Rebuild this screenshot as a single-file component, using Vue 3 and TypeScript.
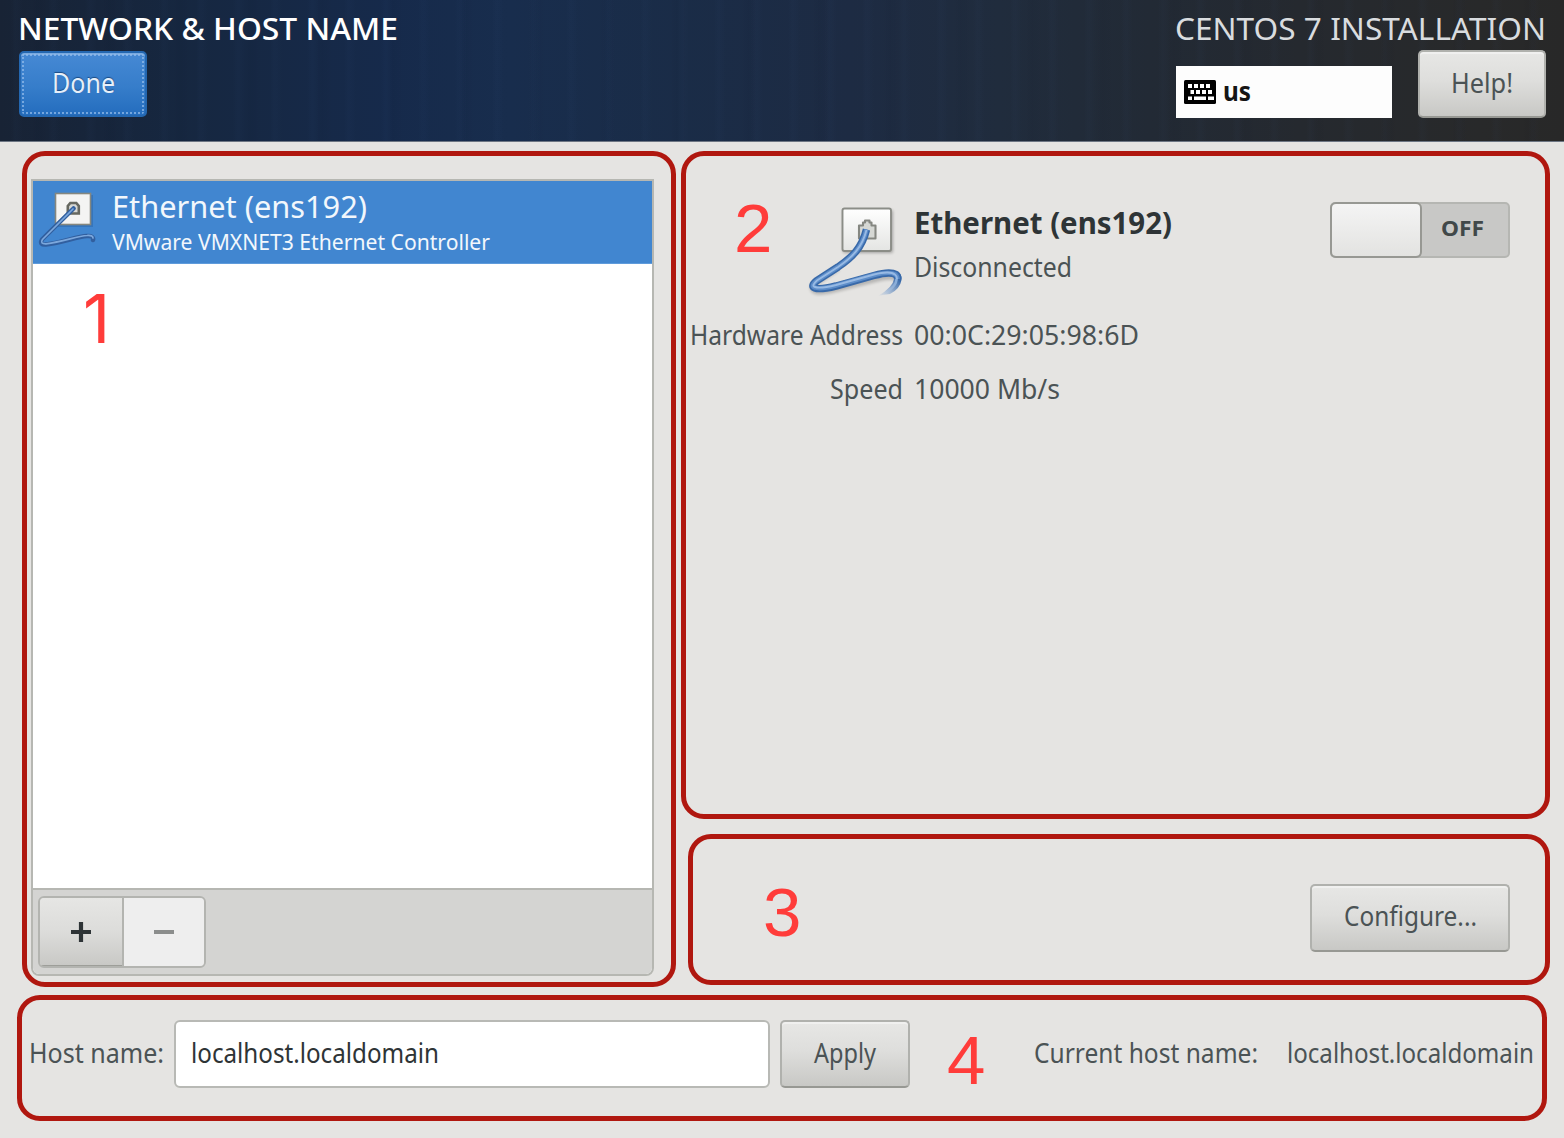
<script setup lang="ts">
import { h, ref, type FunctionalComponent } from 'vue'

interface LabelProps {
  text: string
  w: number
}

/* A single line of text fitted to a given width; the baseline sits 24px below the top. */
const FitLabel: FunctionalComponent<LabelProps> = (props) =>
  h('svg', { width: props.w, height: 30, style: 'display:block;overflow:visible;flex:none' }, [
    h(
      'text',
      { x: 0, y: 24, fill: 'currentColor', textLength: props.w, lengthAdjust: 'spacingAndGlyphs' },
      props.text,
    ),
  ])
FitLabel.props = ['text', 'w']

const device = ref('Ethernet (ens192)')
const hostName = ref('localhost.localdomain')
</script>

<template>
  <div class="screen">
    <header class="header">
      <div class="header-left">
        <FitLabel class="title strong" text="NETWORK &amp; HOST NAME" :w="380" />
        <button class="btn done"><FitLabel text="Done" :w="63" /></button>
      </div>
      <div class="header-right">
        <FitLabel class="title" text="CENTOS 7 INSTALLATION" :w="371" />
        <div class="header-tools">
          <div class="layout">
            <svg width="32" height="24" viewBox="0 0 32 24">
              <rect width="32" height="24" rx="1.5" fill="#000" />
              <g fill="#fff">
                <path d="M4 4h4v4H4zM10 4h4v4h-4zM16 4h4v4h-4zM22 4h4v4h-4z" />
                <path d="M6.500 10h3.500v4H6.500zM12 10h4v4h-4zM18 10h4v4h-4zM24 10h4v4h-4z" />
                <path d="M4 16.500h4v3.500H4zM10 16.500h12v3.500H10zM24 16.500h6v3.500h-6z" />
              </g>
            </svg>
            <FitLabel class="layout-name" text="us" :w="28" />
          </div>
          <button class="btn help"><FitLabel text="Help!" :w="62" /></button>
        </div>
      </div>
    </header>

    <main class="body">
      <div class="upper">
        <section class="frame devices">
          <span class="mark m1">1</span>
          <div class="list">
            <div class="row">
              <svg class="row-icon" width="60" height="62" viewBox="0 0 60 62">
                <rect x="19" y="4" width="36" height="32" fill="#1d4f8a" opacity=".3" />
                <rect x="17.500" y="2.500" width="35" height="31" fill="#f4f4f3" stroke="#85877f" stroke-width="1.600" />
                <path d="M29.800 22.500v-7.500l2.500-3h6l2.500 3v7.500z" fill="#d6d7d3" stroke="#666860" stroke-width="2.600" />
                <path d="M35.500 17.500L4 48.500Q1 54 8 53.500C26 51 39 45.500 49 45Q56 44.500 55 49" fill="none" stroke="#315f9f" stroke-width="4.500" stroke-linecap="round" />
                <path d="M35 18L4.500 48.500Q1.500 53 8 52.800C26 50.500 39 45 49 44.500Q55 44 55 47" fill="none" stroke="#7ba7dc" stroke-width="1.700" stroke-linecap="round" />
              </svg>
              <div class="row-text">
                <FitLabel class="row-title" :text="device" :w="255" />
                <FitLabel class="row-sub" text="VMware VMXNET3 Ethernet Controller" :w="378" />
              </div>
            </div>
            <div class="toolbar">
              <div class="pair">
                <button class="add">
                  <svg width="20" height="20"><path d="M0 10h20M10 0v20" stroke="#2e3436" stroke-width="4.200" /></svg>
                </button>
                <button class="remove">
                  <svg width="20" height="20"><path d="M0 10h20" stroke="#8b8d8c" stroke-width="4.200" /></svg>
                </button>
              </div>
            </div>
          </div>
        </section>

        <div class="right">
          <section class="frame details">
            <span class="mark m2">2</span>
            <div class="summary">
              <svg class="big-icon" width="96" height="92" viewBox="0 0 96 92">
                <defs>
                  <linearGradient id="plate" x1="0" y1="0" x2="0" y2="1">
                    <stop offset="0" stop-color="#fff" />
                    <stop offset="1" stop-color="#e4e5e3" />
                  </linearGradient>
                  <linearGradient id="tail" gradientUnits="userSpaceOnUse" x1="90" y1="73" x2="70" y2="91">
                    <stop offset="0" stop-color="#3869a9" />
                    <stop offset="1" stop-color="#5b8bc9" stop-opacity="0" />
                  </linearGradient>
                  <linearGradient id="tailShine" gradientUnits="userSpaceOnUse" x1="90" y1="73" x2="74" y2="90">
                    <stop offset="0" stop-color="#8eb4e1" />
                    <stop offset="1" stop-color="#b9cfea" stop-opacity="0" />
                  </linearGradient>
                  <filter id="soft" x="-20%" y="-20%" width="140%" height="140%"><feGaussianBlur stdDeviation="1.500" /></filter>
                </defs>
                <rect x="35" y="5" width="50" height="43" rx="2" fill="#000" opacity=".28" filter="url(#soft)" />
                <rect x="34.500" y="3.500" width="48.500" height="42.500" rx="2" fill="url(#plate)" stroke="#8b8d87" stroke-width="1.900" />
                <path d="M51 33.500v-13h4v-3h2v-2h4.500v2h2v3h4v13z" fill="#d6d8d4" stroke="#858781" stroke-width="2.100" stroke-linejoin="round" />
                <path d="M30 63L9 77Q2 83 7 86Q12 88 28 84L68 74Q84 70 89 73.500" fill="none" stroke="#000" opacity=".2" stroke-width="6" filter="url(#soft)" />
                <path d="M83 65Q95 67 93.500 75Q92 84 82 89Q76 89.500 70 91Q85 82 86 74Z" fill="url(#tail)" />
                <path d="M88 71Q91 80 76 89" fill="none" stroke="url(#tailShine)" stroke-width="2.600" />
                <path d="M58.500 24.500C54 43 44 52.500 30 62L9 75.500Q2 81 7 83Q12 85 28 81L66 70.500Q82 66 88 69.500Q90 71 89.500 74" fill="none" stroke="#3869a9" stroke-width="7.500" />
                <path d="M58.500 24.500C54 43 44 52.500 30 62L9 75.500Q2 81 7 82.500Q12 84.500 28 80.500L66 70Q82 66 87.500 69.500Q89.500 71 89.500 74" fill="none" stroke="#5d8dc9" stroke-width="4.500" />
                <path d="M58.500 25C54 43 44 52.500 30 62L9 75.500Q3 81 7 82Q12 84 28 80L66 69.500Q82 65.500 87 69.500Q89 71 89 74" fill="none" stroke="#98bae4" stroke-width="1.900" />
              </svg>
              <div class="summary-text">
                <FitLabel class="device-name" :text="device" :w="258" />
                <FitLabel class="status" text="Disconnected" :w="158" />
              </div>
              <div class="switch">
                <div class="knob"></div>
                <FitLabel class="off" text="OFF" :w="43" />
              </div>
            </div>
            <div class="facts">
              <FitLabel text="Hardware Address" :w="213" />
              <FitLabel text="00:0C:29:05:98:6D" :w="225" />
              <FitLabel text="Speed" :w="73" />
              <FitLabel text="10000 Mb/s" :w="146" />
            </div>
          </section>

          <section class="frame configure">
            <span class="mark m3">3</span>
            <button class="btn conf"><FitLabel text="Configure..." :w="133" /></button>
          </section>
        </div>
      </div>

      <section class="frame host">
        <FitLabel text="Host name:" :w="135" />
        <div class="entry"><FitLabel :text="hostName" :w="248" /></div>
        <button class="btn apply"><FitLabel text="Apply" :w="62" /></button>
        <span class="mark m4">4</span>
        <div class="current">
          <FitLabel text="Current host name:" :w="224" />
          <FitLabel :text="hostName" :w="247" />
        </div>
      </section>
    </main>
  </div>
</template>

<style>
body {
  background: #e5e4e2;
}
</style>

<style scoped>
* {
  box-sizing: border-box;
}
.screen {
  width: 1564px;
  height: 1138px;
  background: #e5e4e2;
  color: #4b5355;
  font: 28px 'Noto Sans', 'Open Sans', sans-serif;
}
.header {
  height: 142px;
  display: flex;
  justify-content: space-between;
  padding: 16px 18px 0 17px;
  border-bottom: 1px solid #6d7683;
  color: #fff;
  background:
    repeating-linear-gradient(90deg, rgba(70, 105, 165, 0) 0 11px, rgba(70, 105, 165, 0.03) 15px 17px, rgba(70, 105, 165, 0) 23px 37px),
    repeating-linear-gradient(90deg, rgba(0, 0, 20, 0) 0 31px, rgba(0, 0, 20, 0.04) 38px, rgba(0, 0, 20, 0) 49px 71px),
    linear-gradient(90deg, #182335 0, #162740 180px, #162a4b 390px, #182d4d 510px, #1a2c47 680px, #1d2b43 850px, #202c3d 1000px, #222a35 1150px, #25292f 1300px, #28292a 1480px, #282828 100%);
}
.title {
  font-size: 30px;
  color: #d9dcdf;
  font-weight: 400;
}
.strong {
  margin-left: 1px;
  color: #fff;
  font-weight: 550;
}
.btn {
  display: flex;
  align-items: center;
  justify-content: center;
  padding: 0;
  font: inherit;
  color: #4b5355;
  border: 2px solid #b0b1ad;
  border-bottom-color: #979893;
  border-radius: 5px;
  background: linear-gradient(#e7e7e5, #dededc 45%, #c8c8c5);
  box-shadow: inset 0 2px 0 #f0f0ef;
}
.done {
  width: 128px;
  height: 66px;
  margin: 5px 0 0 2px;
  color: #e6effa;
  border-color: #2467b0;
  background: linear-gradient(#4689d4, #367dca 55%, #246dbe);
  outline: 2px dotted rgba(150, 190, 235, 0.7);
  outline-offset: -5px;
  box-shadow: inset 0 2px 0 #79a9df;
  text-shadow: 0 -1px 1px #1c4c84;
}
.header-right {
  display: flex;
  flex-direction: column;
  width: 371px;
}
.header-tools {
  display: flex;
  align-items: flex-end;
  justify-content: space-between;
  margin: 4px 0 0 1px;
}
.layout {
  width: 216px;
  height: 52px;
  display: flex;
  align-items: center;
  gap: 7px;
  padding-left: 8px;
  background: #fdfdfd;
}
.layout-name {
  font-size: 26px;
  font-weight: 700;
  color: #151515;
  margin-top: -1px;
}
.help {
  width: 128px;
  height: 68px;
  padding-bottom: 1px;
}
.body {
  padding-top: 9px;
}
.upper {
  display: flex;
  gap: 4px;
  margin-left: 22px;
}
.frame {
  position: relative;
  border: 5px solid #b0170f;
  border-radius: 23px;
}
.devices {
  width: 654px;
  height: 836px;
  padding: 23px 0 0 4px;
}
.list {
  width: 623px;
  height: 797px;
  display: flex;
  flex-direction: column;
  border: 2px solid #b6b7b2;
  border-radius: 0 0 8px 8px;
  overflow: hidden;
  background: #fff;
}
.row {
  height: 83px;
  display: flex;
  background: #4186d0;
  border-bottom: 1px solid #5f9bdb;
}
.row-icon {
  margin: 10px 0 0 5px;
}
.row-text {
  color: #f2f7fc;
  padding: 13px 0 0 14px;
}
.row-title {
  font-size: 30px;
}
.row-sub {
  font-size: 22.5px;
  margin: 2px 0 0;
}
.toolbar {
  margin-top: auto;
  height: 86px;
  padding: 6px 0 0 5px;
  border-top: 2px solid #b6b7b2;
  background: #d4d4d2;
}
.pair {
  display: flex;
  width: 168px;
  height: 72px;
  border: 2px solid #b3b4b0;
  border-radius: 6px;
  overflow: hidden;
}
.pair button {
  display: flex;
  align-items: center;
  justify-content: center;
  border: 0;
  padding: 0 1px 0 0;
}
.add {
  width: 84px;
  border-right: 2px solid #b3b4b0 !important;
  background: linear-gradient(#e6e6e4, #dcdcda 50%, #c8c8c5);
  box-shadow: inset 0 -1px 0 #9d9e99;
}
.remove {
  flex: 1;
  background: #eee;
}
.right {
  width: 869px;
  margin-left: 1px;
}
.details {
  height: 668px;
  padding: 46px 35px 0 0;
}
.summary {
  display: flex;
}
.big-icon {
  margin: 3px 0 0 122px;
  overflow: visible;
}
.summary-text {
  margin: 8px 0 0 10px;
}
.device-name {
  font-size: 30px;
  font-weight: 700;
  color: #2e3436;
}
.status {
  margin: 13px 0 0;
}
.switch {
  width: 180px;
  height: 56px;
  margin-left: auto;
  display: flex;
  align-items: center;
  border: 2px solid #b5b6b2;
  border-radius: 5px;
  background: #c8c8c6;
}
.knob {
  width: 92px;
  height: 56px;
  margin-left: -2px;
  border: 2px solid #979893;
  border-radius: 6px;
  background: linear-gradient(#f4f4f4, #e3e3e1);
}
.off {
  margin: -6px 0 0 19px;
  font-size: 22px;
  font-weight: 700;
  color: #414849;
}
.facts {
  display: grid;
  grid-template-columns: 215px auto;
  justify-items: end;
  gap: 24px 11px;
  margin: 24px 0 0 2px;
}
.facts > :nth-child(even) {
  justify-self: start;
}
.configure {
  height: 151px;
  margin: 15px 0 0 7px;
  padding: 45px 35px 0;
}
.conf {
  width: 200px;
  height: 68px;
  margin-left: auto;
  padding-bottom: 2px;
}
.host {
  display: flex;
  align-items: center;
  width: 1530px;
  height: 126px;
  margin: 8px 0 0 17px;
  padding: 0 8px 8px 7px;
}
.entry {
  width: 596px;
  height: 68px;
  margin: 0 10px;
  padding: 17px 0 0 15px;
  border: 2px solid #b8b9b5;
  border-radius: 6px;
  background: #fff;
  color: #2e3436;
}
.apply {
  width: 130px;
  height: 68px;
}
.current {
  display: flex;
  gap: 29px;
  margin-left: auto;
}
.mark {
  position: absolute;
  font: 69px/80px 'Liberation Sans', Arial, sans-serif;
  color: #ff3c3a;
}
.m1 {
  left: 56px;
  top: 123px;
  font: 67px/80px Inter, 'Liberation Sans', sans-serif;
}
.m2 { left: 48px; top: 33px; }
.m3 { left: 70px; top: 34px; }
.m4 { left: 925px; top: 21px; }
</style>
